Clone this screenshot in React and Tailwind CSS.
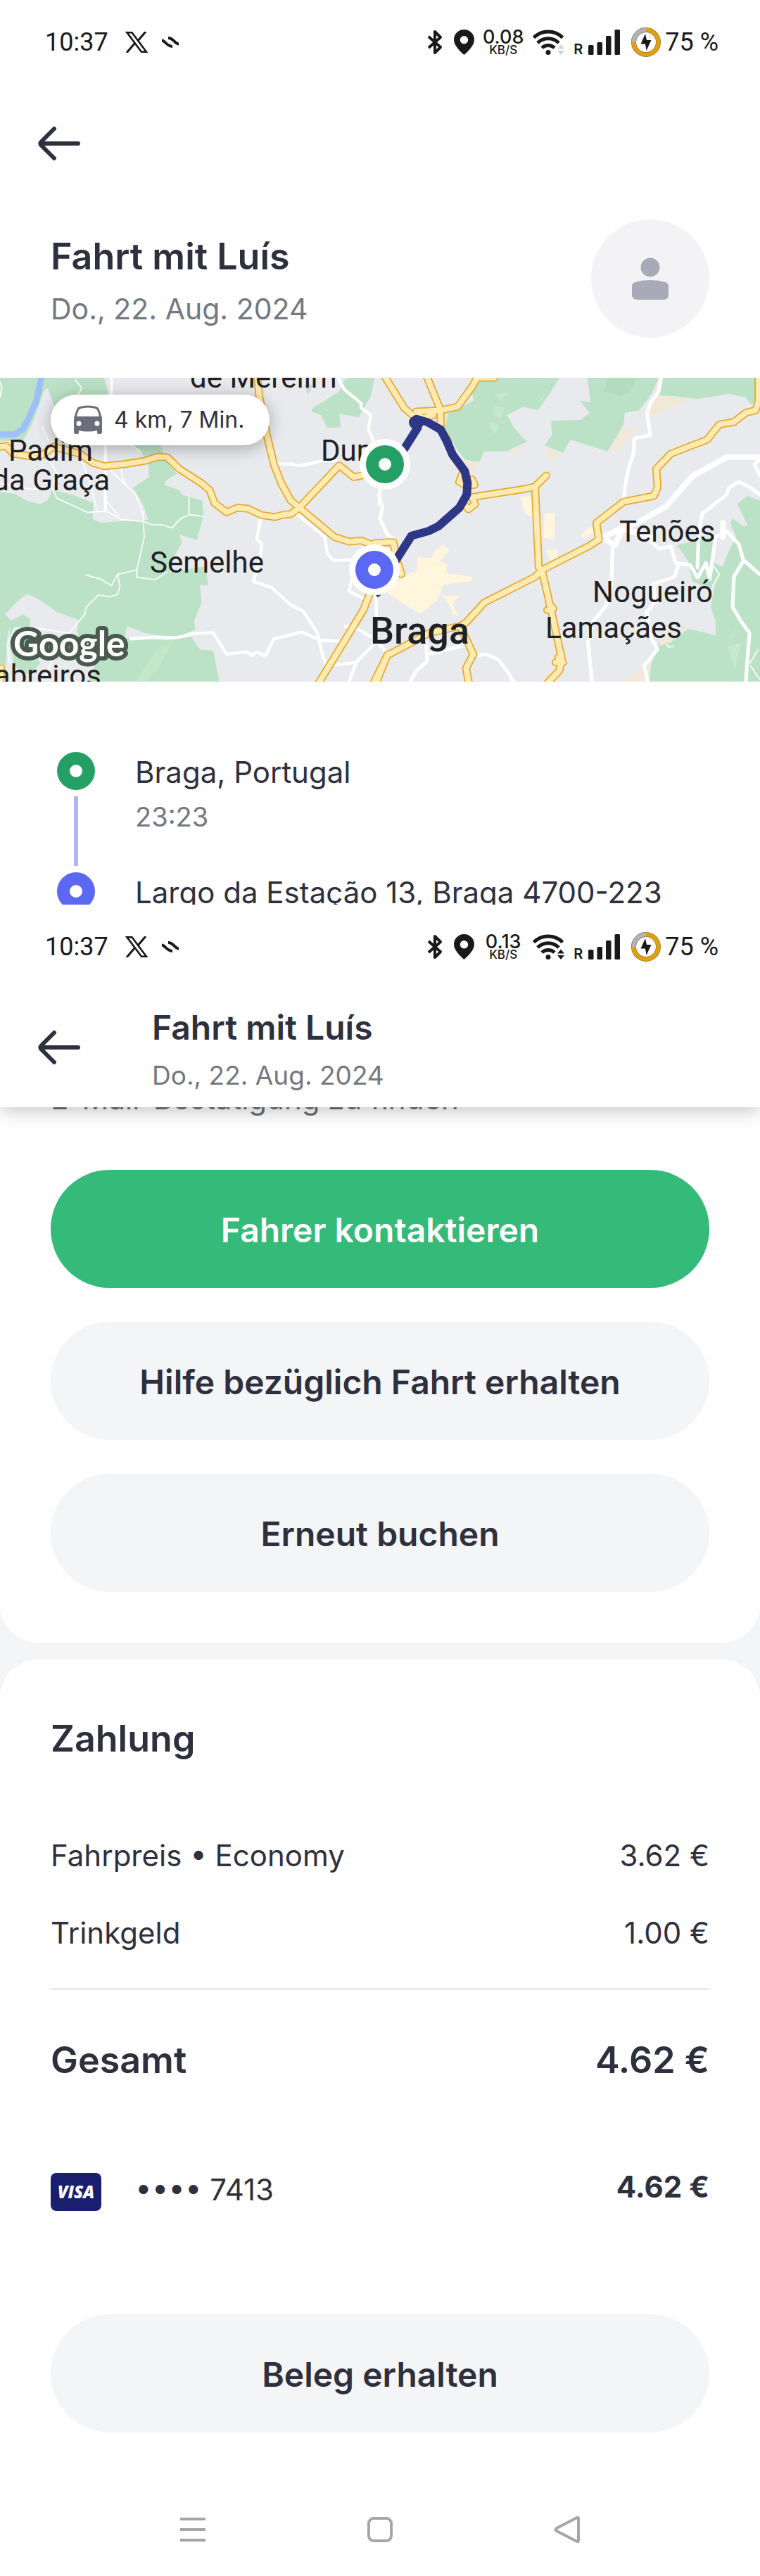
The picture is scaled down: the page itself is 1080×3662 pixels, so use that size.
const INTER = "font-['Inter',sans-serif]";
const ROBOTO = "font-['Roboto',sans-serif]";

/* ---------- Status bar ---------- */

function BluetoothIcon() {
  return (
    <svg viewBox="0 0 22 36" className="h-9 w-[22px]" fill="none" stroke="#191919" strokeWidth="4" strokeLinejoin="round" aria-hidden="true">
      <path d="M2 10 L19 25 L11 33 V3 L19 11 L2 26" />
    </svg>
  );
}

function PinIcon() {
  return (
    <svg viewBox="0 0 29 36" className="h-9 w-[29px]" fill="#191919" aria-hidden="true">
      <path fillRule="evenodd" d="M14.500 0C6.500 0 0 6.300 0 14.300 0 22 7 29.500 14.500 36 22 29.500 29 22 29 14.300 29 6.300 22.500 0 14.500 0ZM14.500 9a5.700 5.700 0 1 1 0 11.400a5.700 5.700 0 0 1 0-11.400Z" />
    </svg>
  );
}

function WifiIcon({ active }) {
  return (
    <svg viewBox="0 0 46 36" className="h-9 w-[46px]" fill="none" stroke="#191919" strokeWidth="5" aria-hidden="true">
      <path d="M1.500 11.500A29 29 0 0 1 42.500 11.500" />
      <path d="M7 19A21 21 0 0 1 37 19" />
      <path d="M13 26A13 13 0 0 1 31 26" />
      <circle cx="22" cy="32.500" r="3.500" fill="#191919" stroke="none" />
      <path d="M35 27.500 40 21.500 45 27.500ZM35 30 40 36 45 30Z" fill={active ? "#191919" : "#d2d2d2"} stroke="none" />
    </svg>
  );
}

function SignalIcon() {
  return (
    <svg viewBox="0 0 45 36" className="h-9 w-[45px]" fill="#191919" aria-hidden="true">
      <rect x="0" y="22" width="7.500" height="14" rx="1.500" />
      <rect x="12.500" y="18" width="7.500" height="18" rx="1.500" />
      <rect x="25" y="9" width="7.500" height="27" rx="1.500" />
      <rect x="37.500" y="0" width="7.500" height="36" rx="1.500" />
    </svg>
  );
}

function BatteryIcon() {
  return (
    <svg viewBox="0 0 42 42" className="size-[42px]" fill="none" aria-hidden="true">
      <circle cx="21" cy="21" r="17.500" stroke="#8d7434" strokeWidth="7" />
      <circle cx="21" cy="21" r="17.500" stroke="#e3a00d" strokeWidth="5.600" />
      <path d="M3.500 21A17.500 17.500 0 0 1 21 3.500" stroke="#858585" strokeWidth="7" />
      <path d="M3.500 21A17.500 17.500 0 0 1 21 3.500" stroke="#b4b4b4" strokeWidth="5.600" />
      <path d="M20 9 13.500 23.500H20L21.500 33 28.500 18H22Z" fill="#191919" />
    </svg>
  );
}

function XIcon() {
  return (
    <svg viewBox="0 0 32 30" className="h-[30px] w-8" fill="none" stroke="#191919" aria-hidden="true">
      <path d="M29 0 18 13M13.500 16.500 2 30" strokeWidth="3" />
      <path d="M2.500 1.300H9.500L30 28.700H23Z" strokeWidth="2.600" />
    </svg>
  );
}

function SwirlIcon() {
  return (
    <svg viewBox="0 0 24 16" className="h-4 w-6" fill="none" stroke="#191919" strokeWidth="4" aria-hidden="true">
      <path d="M0 5.500C5 5.500 6 13.500 15 14" />
      <path d="M9 2C17 2 18 10.500 24 10.500" />
    </svg>
  );
}

function StatusBar({ speed, active }) {
  return (
    <div className={`${ROBOTO} flex h-[118px] items-center justify-between pt-0.5 pr-[59px] pl-16 text-[36px] leading-[42px] text-[#191919]`}>
      <div className="flex items-center">
        <span>10:37</span>
        <span className="ml-6"><XIcon /></span>
        <span className="ml-5"><SwirlIcon /></span>
      </div>
      <div className="flex items-center">
        <BluetoothIcon />
        <span className="ml-4"><PinIcon /></span>
        <span className={`${INTER} ml-[11px] flex w-[60px] flex-col items-center font-medium`}>
          <span className="text-[27px] leading-[22px]">{speed}</span>
          <span className="text-[17px] leading-[14px]">KB/S</span>
        </span>
        <span className="ml-3"><WifiIcon active={active} /></span>
        <span className={`${INTER} ml-3 self-end text-[20px] leading-[22px] font-semibold`}>R</span>
        <span className="ml-2"><SignalIcon /></span>
        <span className="ml-4"><BatteryIcon /></span>
        <span className="ml-1.5">75 %</span>
      </div>
    </div>
  );
}

/* ---------- Map ---------- */

const WEST_GREEN = [
  "M0 21H430L445 85 440 110 300 96 240 125 225 145 198 68 185 70 130 225 95 290 0 290Z",
  "M0 510 60 515 110 545 165 560 195 545 215 500 300 520 385 555 383 625 420 640 500 632 612 628 590 560 550 490 615 445 612 385 580 335 545 310 660 305 690 380 730 430 685 460 678 478 740 500 750 520 835 545 840 610 812 712 740 690 750 725 715 790 700 850 850 825 858 905 825 905 832 980 800 1060 808 1095 720 1130 600 1110 525 1080 515 1130 700 1140 790 1125 825 1180 880 1185 905 1317H0Z",
  "M1290 150 1400 80 1420 30 1440 21H1545L1530 100 1480 190 1400 175 1405 232 1350 235 1325 180 1285 165Z",
  "M1255 50 1290 50 1272 92Z",
];
const WEST_GREY = "M22 1030 60 985 110 942 160 965 235 1020 325 1055 318 1100 330 1180 390 1250 365 1317H0V1240L25 1250 30 1130 45 1060Z";
const WEST_GREEN_TOP = "M40 1060 95 1030 125 1050 120 1150 165 1240 120 1290 60 1250 40 1150Z";
const EAST_GREEN = [
  "M400 21H740L700 90 650 160 590 145 525 180 550 230 605 295 520 335 430 335 410 380 350 370 300 300 265 240 280 175 385 120 380 80Z",
  "M855 21H1150L1120 90 1070 160 1010 170 1005 220 940 335 785 285 755 342 680 310 710 265 705 205 830 200 865 170 825 120 870 125Z",
  "M1165 21H1568V110L1530 135 1510 105 1440 90 1310 112 1215 100 1140 95Z",
  "M1475 560 1515 525 1568 545V1317H1110L1120 1240 1150 1150 1250 1085 1385 1120 1385 1060 1365 1000 1380 910 1440 760 1470 700 1445 640 1455 620 1500 655 1517 650Z",
  "M1225 735 1370 700 1380 810 1420 830 1370 920 1290 890 1270 800Z",
];
const DARK_GREEN = ["M940 21H1060L1030 80 990 100 925 80Z"];
const LIGHT_GREEN = [
  "M470 90 530 85 500 120Z", "M475 140 515 150 500 190 470 185Z", "M450 230 465 210 490 225 475 260Z",
  "M650 125 680 90 670 115Z", "M1440 1140 1470 1080 1460 1120Z", "M1435 1170 1490 1150 1465 1265Z",
];
const EAST_TAN = [
  "M1130 98 1290 108 1180 160 1110 190 1080 170Z", "M1000 240 1070 230 980 330 945 345Z",
  "M680 318 750 345 700 375Z", "M340 373 410 385 380 440Z", "M1010 1317 1110 1220 1110 1317Z",
  "M1150 1165 1170 1110 1285 1080 1200 1150Z", "M520 335 605 310 560 345Z",
];
const EAST_SAND = [
  "M20 920 90 880 130 850 150 850 155 785 215 790 220 765 258 733 288 755 245 805 275 812 275 855 380 870 378 888 260 905 240 965 165 1028 120 1000 30 940Z",
  "M255 945 280 955 325 948 300 990 325 1035 300 1032 285 985Z",
  "M578 530 630 525 635 620 600 600Z", "M680 600 720 598 720 710 675 705Z",
  "M685 755 733 752 730 790 700 798Z", "M828 690 870 655 885 680 840 705Z",
];
const WEST_WHITE = [
  "M460 21V95", "M435 300V590", "M1395 21 1420 70 1490 130 1490 150 1530 180 1520 240 1545 300",
  "M1140 390 1200 388 1230 396 1290 385 1330 375 1390 375", "M1230 605 1340 700 1350 770 1375 800 1450 798",
  "M1075 620 1060 710 1080 730 1075 780 1045 890 1120 915 1200 990 1250 1015 1310 1110 1330 1200 1345 1245",
  "M540 1135 640 1128 730 1130 800 1112 880 1108 935 1200 1020 1190 1040 1205 1060 1190 1095 1208 1130 1135 1245 1105 1320 1140 1400 1145",
  "M1345 1250 1470 1235 1550 1150", "M1440 1317 1470 1235", "M1553 950V1060", "M1425 1080 1480 1095 1530 1125",
  "M1450 890 1440 930 1520 975", "M1568 500 1565 560",
];
const EAST_WHITE = [
  "M1160 21 1150 80 1115 130 1102 170 1115 265 1050 280 1045 350 1030 390 1015 460 1005 540",
  "M960 730 955 900 935 990 880 1060 858 1150 875 1317",
  "M1568 520 1530 490 1480 465 1440 490 1430 520 1330 600 1315 680 1310 830",
  "M1120 720 1150 750 1200 740 1220 810 1280 820 1310 875 1345 810 1360 880 1385 700 1430 675 1480 730 1500 800 1460 870 1455 1000 1490 1060 1525 1110 1515 1230 1510 1317",
  "M1500 800 1568 860", "M1230 820 1215 870 1130 900 1135 980 1100 1020 1115 1120 1145 1180 1090 1250 1105 1317",
  "M-5 520 10 575 0 620 30 690 60 710", "M200 1200 360 1160", "M190 1150 195 1230 150 1270 125 1317",
  "M400 1205 440 1200 490 1225 530 1280 550 1317", "M1568 370 1545 390 1568 440", "M-10 1150 30 1195",
];
const EAST_WIDE_WHITE = ["M1568 360H1430L1290 440 1180 570 1060 640 990 665 860 735", "M920 705 970 735 1000 665 1120 700", "M1415 640V700"];
const WEST_THIN = [
  "M175 232 200 290M200 360 240 440 210 480 235 535 360 595 440 590 500 625 595 635 625 648 670 648 710 662 745 622 780 605 840 612",
  "M780 605V525", "M340 380 375 480 400 590", "M455 415 560 520 590 600 595 700 565 840 565 872 640 882 690 850",
  "M440 550 490 610", "M500 400 505 450 525 485", "M565 840 485 860 460 908 415 880 355 862",
  "M485 860 495 910 485 945 455 955 405 948 355 1000 350 1030 285 1110", "M215 1230 190 1290",
  "M0 470 60 485 120 495H170", "M0 105 8 60 0 40", "M310 30 338 65 320 95", "M545 310 580 335", "M40 1240 30 1160 60 1090 130 1085 280 1110",
];
const EAST_THIN = ["M1375 820 1400 860 1370 915", "M1185 1160 1190 1170 1210 1165", "M1530 1250 1568 1310M1525 1240 1560 1180"];
const WEST_MAJOR = [
  "M-20 320 25 312 55 345 130 357 175 350 220 315 330 345 385 385 430 398 510 390 600 375 650 358 690 360 740 410 830 470 865 500 885 555 935 595 980 575 1025 580 1080 607 1135 615 1170 605 1200 602 1235 575",
  "M1060 0 1070 100 1100 260 1130 390 1160 470 1200 545 1235 575 1380 700 1440 720 1490 715 1568 745",
  "M1235 575 1400 395 1460 445 1530 430", "M1305 1340 1400 1180 1500 1010 1530 930", "M1545 1340 1600 1200", "M-20 1270 5 1260 0 1330",
];
const EAST_MAJOR = [
  "M-25 1320 30 1205 130 1150 200 1110 330 1080 355 1065 430 980 640 870 670 840 860 740 903 712 893 640 1005 550 1130 525 1145 490 1140 410 1200 345 1350 285 1400 220 1460 210 1510 170 1550 160 1562 120 1562 0",
  "M10 0 100 150 150 195", "M187 0 250 160V240L280 290", "M470 21H400L380 60 320 145 250 160 150 165 175 195 220 180",
  "M380 530 600 495 640 485 686 438", "M640 490 655 830 670 850 710 1030 750 1220 740 1270 680 1335",
  "M330 1080 385 1200 355 1260 370 1340", "M340 430 327 465 355 480 390 478 380 455", "M380 530 392 560 365 582 355 570",
  "M-20 725 55 722 70 800 88 858", "M698 985 715 1005 690 1012", "M735 1215 755 1235 725 1235",
];
const ROUTE = "M100 325 155 235 137 210 150 197 195 210 250 242 275 290 300 350 350 420 361 470 358 520 328 575 240 655 200 675 130 695 65 800";

const LABELS = [
  { text: "de Merelim", x: 270, y: 14 },
  { text: "Padim", x: 12, y: 118 },
  { text: "da Graça", x: 156, y: 160, end: true },
  { text: "Dum", x: 456, y: 118 },
  { text: "Semelhe", x: 213, y: 277 },
  { text: "abreiros", x: 144, y: 438, end: true },
  { text: "Tenões", x: 880, y: 233 },
  { text: "Nogueiró", x: 842, y: 319 },
  { text: "Lamaçães", x: 775, y: 370 },
];

function Paths({ items, ...props }) {
  return <g {...props}>{items.map((d) => <path key={d} d={d} />)}</g>;
}

function Marker({ x, y, color }) {
  return (
    <g transform={`translate(${x} ${y})`}>
      <circle r="36" fill="#fff" />
      <circle r="27" fill={color} />
      <circle r="9" fill="#fff" />
    </g>
  );
}

function RouteMap() {
  const east = "translate(1568 0)";
  return (
    <svg viewBox="0 0 1080 432" preserveAspectRatio="xMidYMid slice" className="block h-[432px] w-full" role="img" aria-label="Karte der Fahrt in Braga">
      <rect width="1080" height="432" fill="#e8eaed" />
      <g transform="scale(0.34439 0.33333) translate(0 -21)" fill="none" strokeLinejoin="round" strokeLinecap="round">
        <Paths items={WEST_GREEN} fill="#bbe2c6" />
        <path d={WEST_GREY} fill="#e8eaed" />
        <path d={WEST_GREEN_TOP} fill="#bbe2c6" />
        <path d="M560 1317 640 1190 712 1150 660 1250 600 1317Z" fill="#c4e7c8" />
        <path d="M175 0 150 120 120 190 95 240 60 263 0 263" stroke="#9dc0f9" strokeWidth="26" />
        <g transform={east}>
          <Paths items={EAST_GREEN} fill="#bbe2c6" />
          <Paths items={DARK_GREEN} fill="#b2dcbe" />
          <Paths items={LIGHT_GREEN} fill="#c8e8cc" />
          <Paths items={EAST_TAN} fill="#f1e8d8" />
          <Paths items={EAST_SAND} fill="#fff6dc" />
        </g>
        <Paths items={WEST_THIN} stroke="#fff" strokeWidth="5" />
        <Paths items={WEST_WHITE} stroke="#fff" strokeWidth="13" />
        <g transform={east}>
          <Paths items={EAST_THIN} stroke="#fff" strokeWidth="5" />
          <Paths items={EAST_WHITE} stroke="#fff" strokeWidth="15" />
          <Paths items={EAST_WIDE_WHITE} stroke="#fff" strokeWidth="24" />
        </g>
        <Paths items={WEST_MAJOR} stroke="#e5a82c" strokeWidth="33" />
        <Paths items={EAST_MAJOR} stroke="#e5a82c" strokeWidth="33" transform={east} />
        <Paths items={WEST_MAJOR} stroke="#ffeab0" strokeWidth="23" />
        <Paths items={EAST_MAJOR} stroke="#ffeab0" strokeWidth="23" transform={east} />
        <g transform={east}>
          <path d={ROUTE} stroke="#2e3785" strokeWidth="35" />
          <circle cx="150" cy="212" r="30" fill="#2e3785" />
          <path d="M-18 947H5L-10 958Z" fill="#2e3785" />
        </g>
      </g>
      <g fill="#202124" className={`${ROBOTO} text-[42px]`}>
        {LABELS.map((l) => (
          <text key={l.text} x={l.x} y={l.y} textAnchor={l.end ? "end" : "start"}>{l.text}</text>
        ))}
        <text x="526" y="378" className="text-[54px] font-medium">Braga</text>
      </g>
      <text x="19" y="396" fill="#fff" stroke="#4b5a50" strokeWidth="12" strokeLinejoin="round" paintOrder="stroke" className="font-['Lato',sans-serif] text-[50px] font-bold">Google</text>
      <Marker x={547} y={123} color="#249f65" />
      <Marker x={532} y={273} color="#5b68f4" />
    </svg>
  );
}

function CarIcon() {
  return (
    <svg viewBox="0 0 42 42" className="size-[42px]" aria-hidden="true">
      <path fill="#6b6d7a" fillRule="evenodd" d="M9 2Q21-1 33 2Q36 3 37 6L41 18V38Q41 41 38 41H36Q34 41 34 38V36Q21 39 8 36V38Q8 41 6 41H4Q1 41 1 38V18L5 6Q6 3 9 2ZM10 5Q21 2 32 5Q34 6 35 9L37 16H5L7 9Q8 6 10 5Z" />
      <circle cx="8" cy="26" r="3.500" fill="#fff" />
      <circle cx="34" cy="26" r="3.500" fill="#fff" />
    </svg>
  );
}

/* ---------- Shared pieces ---------- */

function BackButton() {
  return (
    <button type="button" aria-label="Zurück" className="flex size-[84px] items-center justify-center">
      <svg viewBox="0 0 60 50" className="h-[50px] w-[60px]" fill="none" stroke="#2f303d" strokeWidth="6" strokeLinecap="round" strokeLinejoin="round" aria-hidden="true">
        <path d="M57 25H4M23 4 5 22Q2 25 5 28L23 46" />
      </svg>
    </button>
  );
}

function PillButton({ children, primary }) {
  return (
    <button
      type="button"
      className={`h-[168px] w-full rounded-full pt-1 text-[48px] leading-[60px] font-semibold ${primary ? "bg-[#34ba79] text-white" : "bg-[#f4f5f7]"}`}
    >
      {children}
    </button>
  );
}

function StopDot({ color }) {
  return (
    <svg viewBox="0 0 54 54" className="size-[54px] shrink-0" aria-hidden="true">
      <circle cx="27" cy="27" r="27" fill={color} />
      <circle cx="27" cy="27" r="9" fill="#fff" />
    </svg>
  );
}

function VisaCard() {
  return (
    <span className="flex h-[54px] w-[72px] items-center justify-center rounded-lg bg-[#191e6f] font-['Open_Sans',sans-serif] text-[24px] leading-[30px] font-extrabold text-white italic">
      VISA
    </span>
  );
}

/* ---------- Screens ---------- */

function TripTop() {
  return (
    <section>
      <StatusBar speed="0.08" />
      <div className="px-[42px] pt-11"><BackButton /></div>
      <div className="flex items-center justify-between px-[72px] pt-[66px] pb-[57px]">
        <div className="pt-1.5">
          <h1 className="text-[52px] leading-[72px] font-semibold">Fahrt mit Luís</h1>
          <p className="pt-2 text-[41px] leading-[60px] text-[#737881]">Do., 22. Aug. 2024</p>
        </div>
        <svg viewBox="0 0 168 168" className="size-[168px]" role="img" aria-label="Fahrer">
          <circle cx="84" cy="84" r="84" fill="#f3f3f6" />
          <circle cx="84" cy="68" r="13.500" fill="#a8aab8" />
          <path d="M58 95Q58 90 63 89Q84 83 105 89Q110 90 110 95V107Q110 114 103 114H65Q58 114 58 107Z" fill="#a8aab8" />
        </svg>
      </div>
      <div className="relative">
        <RouteMap />
        <div className="absolute top-6 left-[72px] flex h-[72px] items-center gap-4 rounded-full bg-white pr-9 pl-8 text-[32px] leading-[40px] shadow-[0_4px_24px_rgba(0,0,0,0.3)]">
          <CarIcon />
          4 km, 7 Min.
        </div>
      </div>
      <ol className="h-[317px] overflow-hidden px-[81px] pt-[100px]">
        <li className="flex gap-[57px]">
          <div className="flex flex-col items-center">
            <StopDot color="#249f65" />
            <span className="mt-[9px] h-[99px] w-1.5 bg-[#b0b5ef]" />
          </div>
          <div>
            <p className="text-[42px] leading-[58px]">Braga, Portugal</p>
            <p className="pt-[5px] text-[38px] leading-[58px] text-[#737881]">23:23</p>
          </div>
        </li>
        <li className="flex gap-[57px] pt-[9px]">
          <StopDot color="#5b68f4" />
          <p className="text-[42px] leading-[58px]">Largo da Estação 13, Braga 4700-223</p>
        </li>
      </ol>
    </section>
  );
}

function TripDetails() {
  return (
    <section className="overflow-hidden bg-[#f4f5f7]">
      <div className="relative z-10 bg-white shadow-[0_2px_28px_rgba(0,0,0,0.28)]">
        <StatusBar speed="0.13" active />
        <header className="flex items-center gap-[90px] px-[42px] pt-3 pb-[13px]">
          <BackButton />
          <div className="pt-[9px]">
            <h2 className="text-[48px] leading-[72px] font-semibold">Fahrt mit Luís</h2>
            <p className="text-[37px] leading-[64px] text-[#737881]">Do., 22. Aug. 2024</p>
          </div>
        </header>
      </div>
      <div className="rounded-b-[54px] bg-white px-[72px] pb-[72px]">
        <p className="-mt-[42px] text-[42px] leading-[60px] text-[#6d7078]">E-Mail-Bestätigung zu finden</p>
        <div className="flex flex-col gap-12 pt-[71px]">
          <PillButton primary>Fahrer kontaktieren</PillButton>
          <PillButton>Hilfe bezüglich Fahrt erhalten</PillButton>
          <PillButton>Erneut buchen</PillButton>
        </div>
      </div>
      <div className="mt-6 rounded-t-[54px] bg-white px-[72px] pt-[77px]">
        <h2 className="text-[52px] leading-[72px] font-semibold">Zahlung</h2>
        <dl className="pt-[100px] text-[42px] leading-[60px]">
          <div className="flex justify-between">
            <dt>Fahrpreis • Economy</dt>
            <dd>3.62 €</dd>
          </div>
          <div className="flex justify-between pt-[50px]">
            <dt>Trinkgeld</dt>
            <dd>1.00 €</dd>
          </div>
          <div className="mt-12 flex justify-between border-t-[3px] border-[#e8e9ec] pt-16 text-[52px] leading-[72px] font-semibold">
            <dt>Gesamt</dt>
            <dd>4.62 €</dd>
          </div>
        </dl>
        <div className="flex items-end pt-[114px] text-[42px] leading-[60px]">
          <VisaCard />
          <span className="pl-12">•••• 7413</span>
          <span className="ml-auto pb-1 font-bold">4.62 €</span>
        </div>
        <div className="pt-[147px]"><PillButton>Beleg erhalten</PillButton></div>
      </div>
      <nav aria-label="Systemnavigation" className="flex h-[204px] items-center justify-center gap-[182px] bg-white pt-[72px]">
        <button type="button" aria-label="Letzte Apps" className="flex w-[84px] justify-center">
          <svg viewBox="0 0 36 36" className="size-9" stroke="#a5a5a5" strokeWidth="4"><path d="M0 3H36M0 18H36M0 33H36" /></svg>
        </button>
        <button type="button" aria-label="Startseite" className="flex w-[84px] justify-center">
          <svg viewBox="0 0 36 36" className="size-9" fill="none" stroke="#a5a5a5" strokeWidth="4"><rect x="2" y="2" width="32" height="32" rx="7" /></svg>
        </button>
        <button type="button" aria-label="Zurück" className="flex w-[84px] justify-center">
          <svg viewBox="0 0 38 40" className="h-10 w-[38px]" fill="none" stroke="#a5a5a5" strokeWidth="4" strokeLinejoin="round"><path d="M33 3Q35 2 35 5V35Q35 38 33 37L4 22Q1 20 4 18Z" /></svg>
        </button>
      </nav>
    </section>
  );
}

export default function App() {
  return (
    <main className={`${INTER} overflow-hidden bg-white text-[#2f303d]`}>
      <TripTop />
      <TripDetails />
    </main>
  );
}
